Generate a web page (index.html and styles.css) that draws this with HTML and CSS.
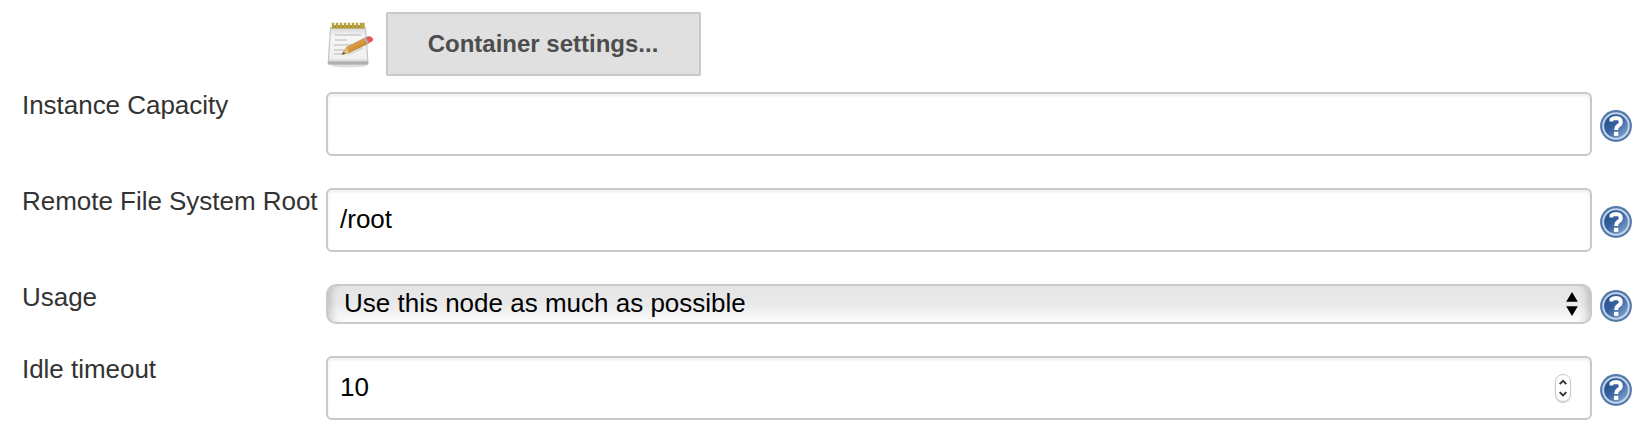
FILE: index.html
```html
<!DOCTYPE html>
<html lang="en">
<head>
<meta charset="utf-8">
<title>Container template</title>
<link rel="stylesheet" href="styles.css">
</head>
<body>
<svg class="defs" width="0" height="0" aria-hidden="true">
  <defs>
    <linearGradient id="blue" x1="0" y1="0" x2="1" y2="1">
      <stop offset="0" stop-color="#1c4687"/><stop offset=".45" stop-color="#35619f"/><stop offset="1" stop-color="#92b4dc"/>
    </linearGradient>
    <symbol id="help" viewBox="0 0 32 32">
      <circle cx="16" cy="16" r="15.9" fill="#5478ac"/>
      <circle cx="16" cy="16" r="12.8" fill="url(#blue)" stroke="#c3d2e8" stroke-width="2"/>
      <path d="M11.5 11.6V9.4Q13 8 16.2 8Q20.8 8.2 20.8 11.9Q20.8 14.1 18.4 15.6Q16.2 17 16.2 20" fill="none" stroke="#fff" stroke-width="3.9"/>
      <rect x="14" y="21.8" width="4.3" height="4.1" fill="#fff"/>
    </symbol>
  </defs>
</svg>
<form class="settings">
  <div class="row row-button">
    <span></span>
    <div class="action">
      <svg class="notepad" viewBox="0 0 48 48">
        <defs>
          <linearGradient id="paper" x1="0" y1="0" x2="0" y2="1"><stop offset="0" stop-color="#d8d8d8"/><stop offset=".25" stop-color="#f6f6f6"/><stop offset=".85" stop-color="#f0f0f0"/><stop offset="1" stop-color="#b8b8b8"/></linearGradient>
          <linearGradient id="wood" x1="0" y1="0" x2="1" y2="1"><stop offset="0" stop-color="#f1c36f"/><stop offset=".5" stop-color="#d9963a"/><stop offset="1" stop-color="#a86420"/></linearGradient>
        </defs>
        <ellipse cx="23" cy="43.2" rx="18" ry="2.2" fill="#dedede"/>
        <path d="M4.5 5.5H39.5L42 42H2.2Z" fill="url(#paper)" stroke="#c4c4c4" stroke-width="1.2" stroke-linejoin="round"/>
        <path d="M2.3 39.6H42V42.6H2.3Z" fill="#b0b0b0"/>
        <path d="M6 3.2H37.8V6.4H6Z" fill="#a59030"/>
        <path d="M7 .8V6.4M11 .8V6.4M15 .8V6.4M19 .8V6.4M23 .8V6.4M27 .8V6.4M31 .8V6.4M35 .8V6.4M37.5 .8V6.4" stroke="#b8a23e" stroke-width="2.4"/>
        <path d="M9 13H35M9 18H21M8 23H31M8 28H19M8 32H16" stroke="#ccc" stroke-width="1.6"/>
        <path d="M19 34.5L38 27L36 25Z" fill="#aaa" opacity=".35"/>
        <path d="M15.8 32.5L20.5 25.4L39.8 15.6L43 21L23 30.8Z" fill="url(#wood)" stroke="#b17b35" stroke-width=".7"/>
        <path d="M15.8 32.5L20.5 25.4L23 30.8Z" fill="#e0bd83"/>
        <path d="M15.8 32.5L17.8 29.6L19.2 31.7Z" fill="#665640"/>
        <path d="M37.8 16.6L40.6 15.2L43.6 20.6L40.8 22Z" fill="#b9aaa3"/>
        <path d="M40 15.4Q43 13.2 45.4 15Q48.5 17.4 46 19.6L43 20.9Z" fill="#e55656"/>
      </svg>
      <button class="button" type="button">Container settings...</button>
    </div>
  </div>
  <div class="row">
    <label class="label">Instance Capacity</label>
    <div class="field"></div>
    <svg class="help"><use href="#help"/></svg>
  </div>
  <div class="row">
    <label class="label">Remote File System Root</label>
    <div class="field"><span>/root</span></div>
    <svg class="help"><use href="#help"/></svg>
  </div>
  <div class="row row-select">
    <label class="label">Usage</label>
    <div class="select"><span class="selected">Use this node as much as possible</span>
      <svg class="arrows" viewBox="0 0 12 24"><path d="M6 0L11.8 9.8H.2ZM6 24L11.8 14.2H.2Z"/></svg>
    </div>
    <svg class="help help-select"><use href="#help"/></svg>
  </div>
  <div class="row">
    <label class="label">Idle timeout</label>
    <div class="field"><span>10</span>
      <span class="stepper"><svg viewBox="0 0 14 26"><path d="M3.7 9.2L7 5.9L10.3 9.2M3.7 17.2L7 20.5L10.3 17.2"/></svg></span>
    </div>
    <svg class="help"><use href="#help"/></svg>
  </div>
</form>
</body>
</html>
```
FILE: styles.css
```css
* { box-sizing: border-box; }
body {
  margin: 0;
  background: #fff;
  color: #333;
  font: 26px/30px "Liberation Sans", Arial, sans-serif;
}
.defs { display: block; }
.settings { padding: 12px 18px 0 22px; }
.row {
  display: grid;
  grid-template-columns: 304px 1266px 40px;
  height: 64px;
  margin-bottom: 32px;
}
.row:last-child { margin-bottom: 0; }
.row-button { margin-bottom: 16px; }
.row-select { height: 40px; }
.label { margin-top: -2px; letter-spacing: -.03px; white-space: nowrap; }
.action { display: flex; align-items: center; gap: 12px; }
.notepad { width: 48px; height: 48px; margin-top: 3px; }
.button {
  width: 315px;
  height: 64px;
  padding: 0 1px 0 0;
  border: 2px solid #c8c8c8;
  border-radius: 2px;
  background: #e0e0e0;
  color: #4d4d4d;
  font: bold 24px/30px "Liberation Sans", Arial, sans-serif;
}
.field {
  display: flex;
  align-items: center;
  justify-content: space-between;
  height: 64px;
  padding: 0 19px 2px 12px;
  border: 2px solid #c9c9c9;
  border-radius: 6px;
  background: #fff;
  box-shadow: inset 0 2px 3px rgba(0, 0, 0, .07);
  color: #000;
}
.select {
  display: flex;
  align-items: center;
  justify-content: space-between;
  height: 40px;
  padding: 0 12px 0 16px;
  border: 2px solid #c9c9c9;
  border-radius: 10px;
  background: linear-gradient(#e5e5e5, #e9e9e9 50%, #fcfcfc);
  box-shadow: inset 9px 0 7px -6px rgba(0, 0, 0, .18), inset -9px 0 7px -6px rgba(0, 0, 0, .18);
  color: #000;
}
.selected { margin-bottom: 2px; }
.arrows { width: 12px; height: 24px; }
.help { width: 32px; height: 32px; margin: 18px 0 0 8px; }
.help-select { margin-top: 6px; }
.stepper {
  width: 16px;
  height: 28px;
  border: 1px solid #c8c8c8;
  border-radius: 8px;
  box-shadow: 0 1px 1px rgba(0, 0, 0, .2);
  margin-top: 2px;
}
.stepper svg { display: block; width: 14px; height: 26px; fill: none; stroke: #333; stroke-width: 1.9; }
```
